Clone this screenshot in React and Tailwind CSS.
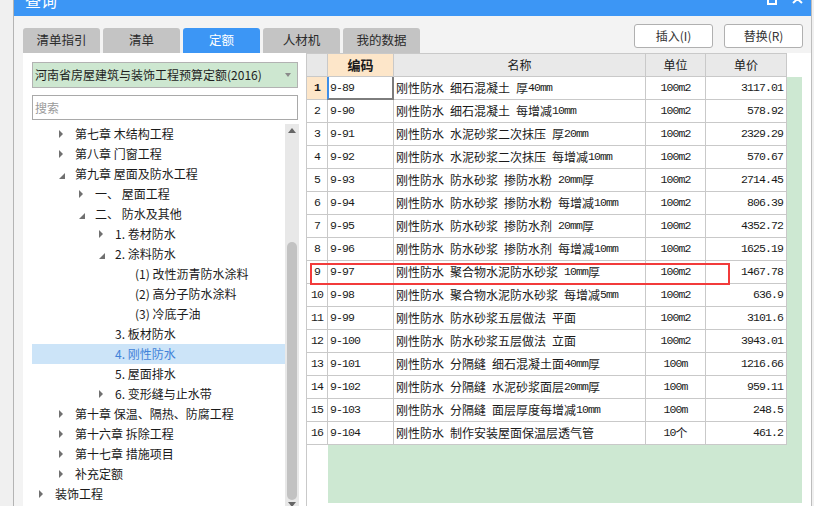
import React from "react";

const tabs = ["清单指引", "清单", "定额", "人材机", "我的数据"];

const tree = [
  { level: 1, text: "第七章 木结构工程", state: "closed" },
  { level: 1, text: "第八章 门窗工程", state: "closed" },
  { level: 1, text: "第九章 屋面及防水工程", state: "open" },
  { level: 2, text: "一、 屋面工程", state: "closed" },
  { level: 2, text: "二、 防水及其他", state: "open" },
  { level: 3, text: "1. 卷材防水", state: "closed" },
  { level: 3, text: "2. 涂料防水", state: "open" },
  { level: 4, text: "(1) 改性沥青防水涂料" },
  { level: 4, text: "(2) 高分子防水涂料" },
  { level: 4, text: "(3) 冷底子油" },
  { level: 3, text: "3. 板材防水" },
  { level: 3, text: "4. 刚性防水", selected: true },
  { level: 3, text: "5. 屋面排水" },
  { level: 3, text: "6. 变形缝与止水带", state: "closed" },
  { level: 1, text: "第十章 保温、隔热、防腐工程", state: "closed" },
  { level: 1, text: "第十六章 拆除工程", state: "closed" },
  { level: 1, text: "第十七章 措施项目", state: "closed" },
  { level: 1, text: "补充定额", state: "closed" },
  { level: 0, text: "装饰工程", state: "closed" },
];

const indent = {
  0: "pl-[7px]",
  1: "pl-[27px]",
  2: "pl-[47px]",
  3: "pl-[67px]",
  4: "pl-[87px]",
};

const rows = [
  ["9-89", "刚性防水 细石混凝土 厚40mm", "100m2", "3117.01"],
  ["9-90", "刚性防水 细石混凝土 每增减10mm", "100m2", "578.92"],
  ["9-91", "刚性防水 水泥砂浆二次抹压 厚20mm", "100m2", "2329.29"],
  ["9-92", "刚性防水 水泥砂浆二次抹压 每增减10mm", "100m2", "570.67"],
  ["9-93", "刚性防水 防水砂浆 掺防水粉 20mm厚", "100m2", "2714.45"],
  ["9-94", "刚性防水 防水砂浆 掺防水粉 每增减10mm", "100m2", "806.39"],
  ["9-95", "刚性防水 防水砂浆 掺防水剂 20mm厚", "100m2", "4352.72"],
  ["9-96", "刚性防水 防水砂浆 掺防水剂 每增减10mm", "100m2", "1625.19"],
  ["9-97", "刚性防水 聚合物水泥防水砂浆 10mm厚", "100m2", "1467.78"],
  ["9-98", "刚性防水 聚合物水泥防水砂浆 每增减5mm", "100m2", "636.9"],
  ["9-99", "刚性防水 防水砂浆五层做法 平面", "100m2", "3101.6"],
  ["9-100", "刚性防水 防水砂浆五层做法 立面", "100m2", "3943.01"],
  ["9-101", "刚性防水 分隔缝 细石混凝土面40mm厚", "100m", "1216.66"],
  ["9-102", "刚性防水 分隔缝 水泥砂浆面层20mm厚", "100m", "959.11"],
  ["9-103", "刚性防水 分隔缝 面层厚度每增减10mm", "100m", "248.5"],
  ["9-104", "刚性防水 制作安装屋面保温层透气管", "10个", "461.2"],
];

// half-width runs in a narrow mono face, like the SimSun grid text
const Mixed = ({ text }) =>
  text
    .split(/([^\x00-\x7f]+)/)
    .filter(Boolean)
    .map((part, i) =>
      /[^\x00-\x7f]/.test(part) ? (
        <span key={i}>{part}</span>
      ) : (
        <span
          key={i}
          className="font-['Liberation_Mono',monospace] text-[11.5px] tracking-[-0.9px] whitespace-pre"
        >
          {part}
        </span>
      )
    );

const Arrow = ({ state }) => {
  if (state === "closed")
    return (
      <svg width="5" height="8" viewBox="0 0 5 8">
        <polygon points="0,0 4,4 0,8" fill="#707070" />
      </svg>
    );
  if (state === "open")
    return (
      <svg width="6" height="6" viewBox="0 0 6 6" className="mt-[3px]">
        <polygon points="6,0 6,6 0,6" fill="#707070" />
      </svg>
    );
  return null;
};

const cell = "h-[23px] border-r border-b border-[#c9c9c9] flex items-center";

export default function App() {
  return (
    <div className="w-[814px] h-[506px] flex bg-[#f0f0f0] overflow-hidden font-['Noto_Sans_CJK_SC','Noto_Sans',sans-serif] text-[12px] text-[#1a1a1a]">
      <div className="w-[14px] h-full border-r border-[#b4b4b4]" />

      <div className="w-[798px] h-full flex flex-col bg-[#f3f3f3] border-r border-[#bdbdbd]">
        {/* Title bar */}
        <div className="h-[16px] shrink-0 bg-[#3c96f5] flex items-start text-white overflow-hidden pl-[11px]">
          <span className="text-[16px] leading-[16px] -mt-[8px]">查询</span>
          <div className="ml-auto flex items-start gap-[15px] pr-[8px]">
            <svg width="10" height="10" className="-mt-[5px]">
              <rect x="1" y="1" width="8" height="8" fill="none" stroke="white" strokeWidth="2" />
            </svg>
            <svg width="11" height="10" className="-mt-[6px]">
              <path d="M1 1 L10 9 M10 1 L1 9" stroke="white" strokeWidth="2" />
            </svg>
          </div>
        </div>

        {/* Tabs + buttons */}
        <div className="h-[37px] shrink-0 flex pl-[9px] pr-[8px]">
          <div className="flex gap-[3px] self-end">
            {tabs.map((t) => (
              <div
                key={t}
                className={`w-[77px] h-[25px] rounded-t-[3px] flex items-center justify-center text-[12.5px] ${
                  t === "定额" ? "bg-[#3c96f5] text-white" : "bg-[#c4c4c4] text-[#2b2b2b]"
                }`}
              >
                {t}
              </div>
            ))}
          </div>
          <div className="ml-auto mt-[8px] flex gap-[11px]">
            <button className="w-[79px] h-[24px] bg-white border border-[#b0b0b0] rounded-[3px] text-[12px] text-[#333]">
              插入(I)
            </button>
            <button className="w-[79px] h-[24px] bg-white border border-[#b0b0b0] rounded-[3px] text-[12px] text-[#333]">
              替换(R)
            </button>
          </div>
        </div>

        <div className="flex-1 min-h-0 flex pl-[9px]">
          {/* Left tree panel */}
          <div className="w-[283px] h-full bg-white pt-[9px] pl-[9px] flex flex-col">
            <div className="w-[266px] h-[26px] shrink-0 bg-[#cde7d0] border border-[#b2b2b2] flex items-center pl-[2px] pr-[6px]">
              <span className="text-[12px] text-[#1e1e1e]">河南省房屋建筑与装饰工程预算定额(2016)</span>
              <svg width="6" height="4" className="ml-auto">
                <polygon points="0,0 6,0 3,4" fill="#8a8a8a" />
              </svg>
            </div>
            <div className="w-[266px] h-[25px] shrink-0 mt-[7px] bg-white border border-[#a9a9a9] flex items-center pl-[2px] text-[12px] text-[#9a9a9a]">
              搜索
            </div>
            <div className="mt-[4px] flex flex-1 min-h-0">
              <div className="w-[253px]">
                {tree.map((n, i) => (
                  <div
                    key={i}
                    className={`h-[20px] flex items-center ${indent[n.level]} ${
                      n.selected ? "bg-[#cce4f8] text-[#3f82d8]" : ""
                    }`}
                  >
                    <span className="w-[16px] flex items-center">
                      <Arrow state={n.state} />
                    </span>
                    <span className="whitespace-pre">{n.text}</span>
                  </div>
                ))}
              </div>
              <div className="w-[14px] h-full bg-[#e8e8e8] flex flex-col items-center overflow-hidden">
                <svg width="8" height="5" className="mt-[4px] shrink-0">
                  <polygon points="0,5 4,0 8,5" fill="#666" />
                </svg>
                <div className="h-[109px] shrink-0" />
                <div className="w-[10px] h-[258px] shrink-0 rounded-full bg-[#c2c2c2]" />
                <svg width="8" height="5" className="mt-[2px] shrink-0">
                  <polygon points="0,0 8,0 4,5" fill="#666" />
                </svg>
              </div>
            </div>
          </div>

          {/* Grid */}
          <div className="flex-1 h-full bg-white flex flex-col relative">
            <div className="flex shrink-0">
              <div className={`${cell} h-[24px] border-t border-l w-[22px] bg-[#e8e8e8]`} />
              <div className={`${cell} h-[24px] border-t w-[66px] bg-[#fde6c9] justify-center font-bold text-[13px]`}>
                编码
              </div>
              <div className={`${cell} h-[24px] border-t w-[252px] bg-[#e9e9e9] justify-center`}>名称</div>
              <div className={`${cell} h-[24px] border-t w-[60px] bg-[#e9e9e9] justify-center`}>单位</div>
              <div className={`${cell} h-[24px] border-t w-[81px] bg-[#e9e9e9] justify-center`}>单价</div>
            </div>
            {rows.map((r, i) => (
              <div key={i} className="flex shrink-0">
                <div
                  className={`${cell} border-l w-[22px] justify-center font-['Liberation_Mono',monospace] text-[11.5px] tracking-[-0.9px] ${
                    i === 0 ? "bg-[#fde6c9] font-bold" : ""
                  }`}
                >
                  {i + 1}
                </div>
                <div className={`${cell} w-[66px] pl-[2px] relative`}>
                  <Mixed text={r[0]} />
                  {i === 0 && (
                    <div className="absolute left-[-1px] top-0 right-[-1px] bottom-[-1px] border-l-2 border-l-[#3f8ee8] border-r-2 border-b-2 border-r-[#7d7d7d] border-b-[#7d7d7d]" />
                  )}
                </div>
                <div className={`${cell} w-[252px] pl-[2px] whitespace-nowrap overflow-hidden`}>
                  <Mixed text={r[1]} />
                </div>
                <div className={`${cell} w-[60px] justify-center`}>
                  <Mixed text={r[2]} />
                </div>
                <div className={`${cell} w-[81px] justify-end pr-[3px]`}>
                  <Mixed text={r[3]} />
                </div>
                <div className="w-[15px] h-[23px] bg-[#cde8d2]" />
              </div>
            ))}
            <div className="flex flex-1 min-h-0">
              <div className="w-[22px] h-full border-l border-[#c9c9c9]" />
              <div className="w-[474px] h-[58px] bg-[#cde8d2]" />
            </div>

            {/* highlight annotation */}
            <div className="absolute left-[4px] top-[210px] w-[420px] h-[22px] border-[2.5px] border-[#f23b3b] pointer-events-none" />
          </div>
        </div>
      </div>
    </div>
  );
}
